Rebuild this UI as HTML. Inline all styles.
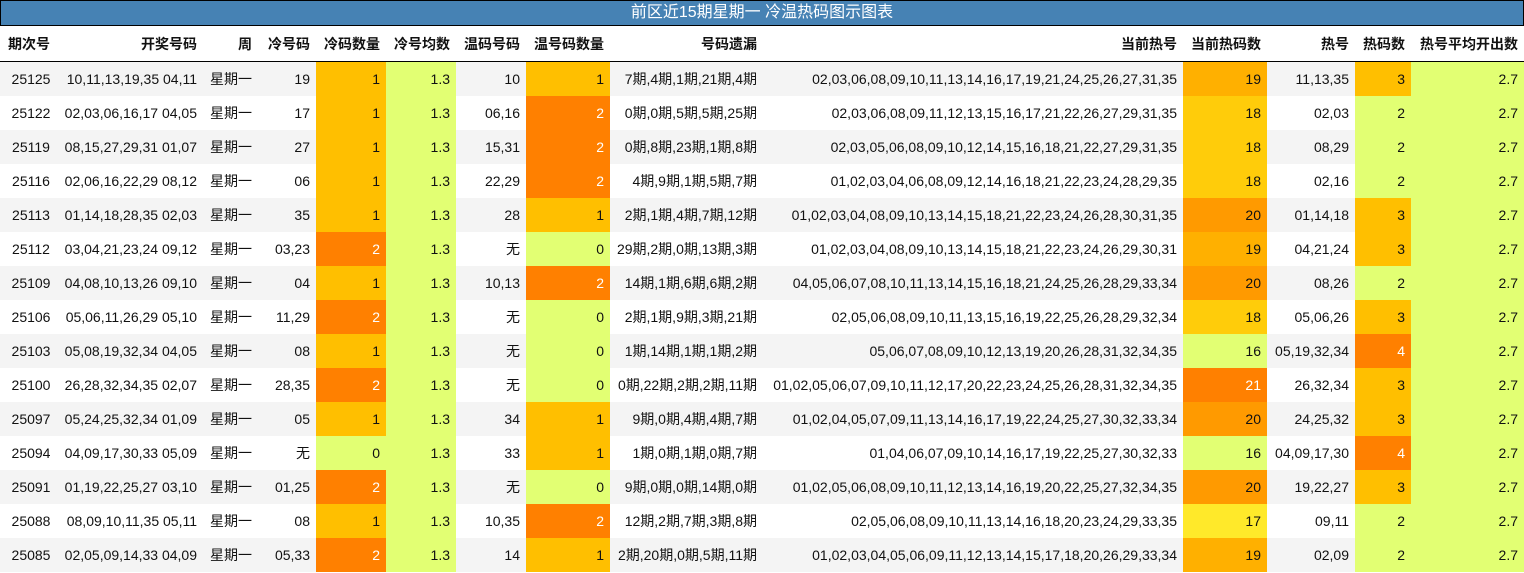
<!DOCTYPE html>
<html><head><meta charset="utf-8"><style>
body{margin:0;width:1524px;height:573px;overflow:hidden;background:#fff;font-family:"Liberation Sans","Noto Sans CJK SC",sans-serif;}
.t{height:24px;background:#4682b4;border:1px solid #000;color:#fff;text-align:center;font-size:16px;line-height:24px;}
table{border-collapse:collapse;table-layout:fixed;width:1524px;font-size:14px;color:#111;}
th{height:35px;font-weight:bold;text-align:right;padding:0 6px 0 0;border-bottom:1px solid #000;white-space:nowrap;}
td{height:34px;padding:0 6px 0 0;text-align:right;white-space:nowrap;overflow:hidden;}
th:first-child{text-align:center;padding:0;}
td:first-child{text-align:center;padding:0 0 0 4px;}
tr:nth-child(odd) td{background:#f4f4f4}
td.a{background:#ffbf00!important}
td.b{background:#ff8000!important;color:#fff}
td.g{background:#e2ff73!important}
td.h16{background:#e2ff73!important}
td.h17{background:#ffe92a!important}
td.h18{background:#ffcc0a!important}
td.h19{background:#ffb000!important}
td.h20{background:#ff9a00!important}
td.h21{background:#ff8000!important;color:#fff}
</style></head><body>
<div class="t">前区近15期星期一 冷温热码图示图表</div>
<table>
<colgroup><col style="width:58px"><col style="width:145px"><col style="width:55px"><col style="width:58px"><col style="width:70px"><col style="width:70px"><col style="width:70px"><col style="width:84px"><col style="width:153px"><col style="width:420px"><col style="width:84px"><col style="width:88px"><col style="width:56px"><col style="width:113px"></colgroup>
<thead><tr><th>期次号</th><th>开奖号码</th><th>周</th><th>冷号码</th><th>冷码数量</th><th>冷号均数</th><th>温码号码</th><th>温号码数量</th><th>号码遗漏</th><th>当前热号</th><th>当前热码数</th><th>热号</th><th>热码数</th><th>热号平均开出数</th></tr></thead>
<tbody>
<tr><td>25125</td><td>10,11,13,19,35 04,11</td><td>星期一</td><td>19</td><td class="a">1</td><td class="g">1.3</td><td>10</td><td class="a">1</td><td>7期,4期,1期,21期,4期</td><td>02,03,06,08,09,10,11,13,14,16,17,19,21,24,25,26,27,31,35</td><td class="h19">19</td><td>11,13,35</td><td class="a">3</td><td class="g">2.7</td></tr>
<tr><td>25122</td><td>02,03,06,16,17 04,05</td><td>星期一</td><td>17</td><td class="a">1</td><td class="g">1.3</td><td>06,16</td><td class="b">2</td><td>0期,0期,5期,5期,25期</td><td>02,03,06,08,09,11,12,13,15,16,17,21,22,26,27,29,31,35</td><td class="h18">18</td><td>02,03</td><td class="g">2</td><td class="g">2.7</td></tr>
<tr><td>25119</td><td>08,15,27,29,31 01,07</td><td>星期一</td><td>27</td><td class="a">1</td><td class="g">1.3</td><td>15,31</td><td class="b">2</td><td>0期,8期,23期,1期,8期</td><td>02,03,05,06,08,09,10,12,14,15,16,18,21,22,27,29,31,35</td><td class="h18">18</td><td>08,29</td><td class="g">2</td><td class="g">2.7</td></tr>
<tr><td>25116</td><td>02,06,16,22,29 08,12</td><td>星期一</td><td>06</td><td class="a">1</td><td class="g">1.3</td><td>22,29</td><td class="b">2</td><td>4期,9期,1期,5期,7期</td><td>01,02,03,04,06,08,09,12,14,16,18,21,22,23,24,28,29,35</td><td class="h18">18</td><td>02,16</td><td class="g">2</td><td class="g">2.7</td></tr>
<tr><td>25113</td><td>01,14,18,28,35 02,03</td><td>星期一</td><td>35</td><td class="a">1</td><td class="g">1.3</td><td>28</td><td class="a">1</td><td>2期,1期,4期,7期,12期</td><td>01,02,03,04,08,09,10,13,14,15,18,21,22,23,24,26,28,30,31,35</td><td class="h20">20</td><td>01,14,18</td><td class="a">3</td><td class="g">2.7</td></tr>
<tr><td>25112</td><td>03,04,21,23,24 09,12</td><td>星期一</td><td>03,23</td><td class="b">2</td><td class="g">1.3</td><td>无</td><td class="g">0</td><td>29期,2期,0期,13期,3期</td><td>01,02,03,04,08,09,10,13,14,15,18,21,22,23,24,26,29,30,31</td><td class="h19">19</td><td>04,21,24</td><td class="a">3</td><td class="g">2.7</td></tr>
<tr><td>25109</td><td>04,08,10,13,26 09,10</td><td>星期一</td><td>04</td><td class="a">1</td><td class="g">1.3</td><td>10,13</td><td class="b">2</td><td>14期,1期,6期,6期,2期</td><td>04,05,06,07,08,10,11,13,14,15,16,18,21,24,25,26,28,29,33,34</td><td class="h20">20</td><td>08,26</td><td class="g">2</td><td class="g">2.7</td></tr>
<tr><td>25106</td><td>05,06,11,26,29 05,10</td><td>星期一</td><td>11,29</td><td class="b">2</td><td class="g">1.3</td><td>无</td><td class="g">0</td><td>2期,1期,9期,3期,21期</td><td>02,05,06,08,09,10,11,13,15,16,19,22,25,26,28,29,32,34</td><td class="h18">18</td><td>05,06,26</td><td class="a">3</td><td class="g">2.7</td></tr>
<tr><td>25103</td><td>05,08,19,32,34 04,05</td><td>星期一</td><td>08</td><td class="a">1</td><td class="g">1.3</td><td>无</td><td class="g">0</td><td>1期,14期,1期,1期,2期</td><td>05,06,07,08,09,10,12,13,19,20,26,28,31,32,34,35</td><td class="h16">16</td><td>05,19,32,34</td><td class="b">4</td><td class="g">2.7</td></tr>
<tr><td>25100</td><td>26,28,32,34,35 02,07</td><td>星期一</td><td>28,35</td><td class="b">2</td><td class="g">1.3</td><td>无</td><td class="g">0</td><td>0期,22期,2期,2期,11期</td><td>01,02,05,06,07,09,10,11,12,17,20,22,23,24,25,26,28,31,32,34,35</td><td class="h21">21</td><td>26,32,34</td><td class="a">3</td><td class="g">2.7</td></tr>
<tr><td>25097</td><td>05,24,25,32,34 01,09</td><td>星期一</td><td>05</td><td class="a">1</td><td class="g">1.3</td><td>34</td><td class="a">1</td><td>9期,0期,4期,4期,7期</td><td>01,02,04,05,07,09,11,13,14,16,17,19,22,24,25,27,30,32,33,34</td><td class="h20">20</td><td>24,25,32</td><td class="a">3</td><td class="g">2.7</td></tr>
<tr><td>25094</td><td>04,09,17,30,33 05,09</td><td>星期一</td><td>无</td><td class="g">0</td><td class="g">1.3</td><td>33</td><td class="a">1</td><td>1期,0期,1期,0期,7期</td><td>01,04,06,07,09,10,14,16,17,19,22,25,27,30,32,33</td><td class="h16">16</td><td>04,09,17,30</td><td class="b">4</td><td class="g">2.7</td></tr>
<tr><td>25091</td><td>01,19,22,25,27 03,10</td><td>星期一</td><td>01,25</td><td class="b">2</td><td class="g">1.3</td><td>无</td><td class="g">0</td><td>9期,0期,0期,14期,0期</td><td>01,02,05,06,08,09,10,11,12,13,14,16,19,20,22,25,27,32,34,35</td><td class="h20">20</td><td>19,22,27</td><td class="a">3</td><td class="g">2.7</td></tr>
<tr><td>25088</td><td>08,09,10,11,35 05,11</td><td>星期一</td><td>08</td><td class="a">1</td><td class="g">1.3</td><td>10,35</td><td class="b">2</td><td>12期,2期,7期,3期,8期</td><td>02,05,06,08,09,10,11,13,14,16,18,20,23,24,29,33,35</td><td class="h17">17</td><td>09,11</td><td class="g">2</td><td class="g">2.7</td></tr>
<tr><td>25085</td><td>02,05,09,14,33 04,09</td><td>星期一</td><td>05,33</td><td class="b">2</td><td class="g">1.3</td><td>14</td><td class="a">1</td><td>2期,20期,0期,5期,11期</td><td>01,02,03,04,05,06,09,11,12,13,14,15,17,18,20,26,29,33,34</td><td class="h19">19</td><td>02,09</td><td class="g">2</td><td class="g">2.7</td></tr>
</tbody></table>
</body></html>
